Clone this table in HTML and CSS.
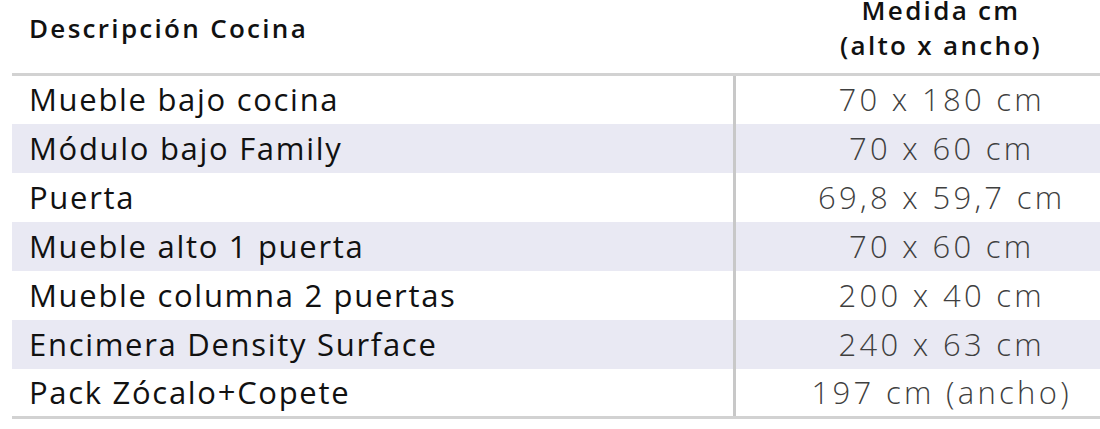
FILE: index.html
```html
<!DOCTYPE html>
<html lang="es">
<head>
<meta charset="utf-8">
<title>Medidas cocina</title>
<link rel="stylesheet" href="styles.css">
</head>
<body>
<table class="sizes">
  <thead>
    <tr>
      <th class="desc-head">Descripción Cocina</th>
      <th class="size-head">Medida cm<br>(alto x ancho)</th>
    </tr>
  </thead>
  <tbody>
    <tr><td class="desc">Mueble bajo cocina</td><td class="size">70 x 180 cm</td></tr>
    <tr class="alt"><td class="desc">Módulo bajo Family</td><td class="size">70 x 60 cm</td></tr>
    <tr><td class="desc">Puerta</td><td class="size">69,8 x 59,7 cm</td></tr>
    <tr class="alt"><td class="desc">Mueble alto 1 puerta</td><td class="size">70 x 60 cm</td></tr>
    <tr><td class="desc">Mueble columna 2 puertas</td><td class="size">200 x 40 cm</td></tr>
    <tr class="alt"><td class="desc">Encimera Density Surface</td><td class="size">240 x 63 cm</td></tr>
    <tr><td class="desc">Pack Zócalo+Copete</td><td class="size">197 cm (ancho)</td></tr>
  </tbody>
</table>
</body>
</html>
```
FILE: styles.css
```css
html, body {
  margin: 0;
  padding: 0;
  background: #ffffff;
  overflow: hidden;
}
body {
  font-family: "Open Sans", "Noto Sans", sans-serif;
  color: #111;
}
.sizes {
  border-collapse: collapse;
  margin: -17px 0 0 12px;
  width: 1136px;
  table-layout: fixed;
}
.sizes th {
  font-weight: 600;
  font-size: 26px;
  letter-spacing: 2.3px;
  line-height: 35px;
  padding: 10px 17px;
  border-bottom: 3px solid #d2d2d2;
  vertical-align: middle;
  color: #111;
}
.desc-head { text-align: left; width: 688px; }
.size-head { text-align: center; }
.sizes td {
  height: 49px;
  padding: 0 17px;
  box-sizing: border-box;
  font-size: 31px;
  line-height: 47px;
  white-space: nowrap;
}
.sizes tbody tr:last-child td { border-bottom: 3px solid #d2d2d2; }
.desc { color: #111; font-weight: 400; letter-spacing: 1.7px; }
.size {
  color: #3f3f3f;
  font-weight: 300;
  letter-spacing: 3.3px;
  text-align: center;
  border-left: 3px solid #c8c8c8;
}
.alt td { background: #e9e9f3; }
```
